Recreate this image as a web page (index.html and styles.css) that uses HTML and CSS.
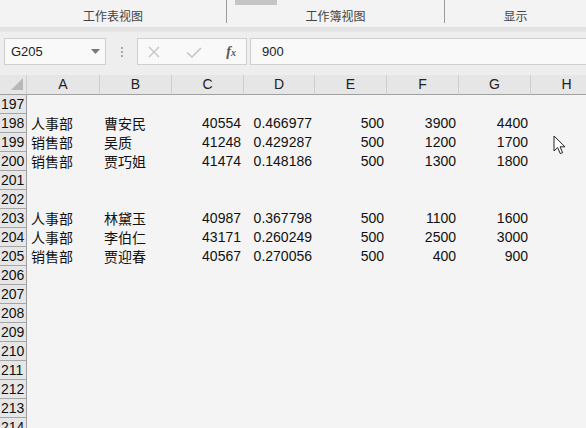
FILE: index.html
```html
<!DOCTYPE html>
<html lang="zh">
<head>
<meta charset="utf-8">
<link rel="stylesheet" href="styles.css">
</head>
<body>
<div class="app">
  <div class="ribbon">
    <div class="group g1"><span>工作表视图</span></div>
    <div class="group g2"><span>工作簿视图</span><div class="chip"></div></div>
    <div class="group g3"><span>显示</span></div>
  </div>
  <div class="band"></div>
  <div class="fbar">
    <div class="namebox"><span>G205</span><svg class="dd" width="9" height="5" viewBox="0 0 9 5"><path d="M0 0H9L4.5 5Z" fill="#777"/></svg></div>
    <div class="dots"><i></i><i></i><i></i></div>
    <div class="btns">
      <svg width="14" height="14" viewBox="0 0 14 14"><path d="M2 2L12 12M12 2L2 12" stroke="#c4c4c4" stroke-width="1.3"/></svg>
      <svg width="16" height="14" viewBox="0 0 16 14"><path d="M1 7.5L6 12L15 3" stroke="#c4c4c4" stroke-width="1.5" fill="none"/></svg>
      <span class="fx"><i>f</i><small>x</small></span>
    </div>
    <div class="input">900</div>
  </div>
  <div class="sheet">
    <div class="corner"><svg width="12" height="12" viewBox="0 0 12 12"><path d="M12 0V12H0Z" fill="#b8b8b8"/></svg></div>
    <div class="ch">A</div><div class="ch">B</div><div class="ch">C</div><div class="ch">D</div><div class="ch">E</div><div class="ch">F</div><div class="ch">G</div><div class="ch">H</div>

    <div class="rh">197</div><div class="c"></div><div class="c"></div><div class="c"></div><div class="c"></div><div class="c"></div><div class="c"></div><div class="c"></div><div class="c"></div>
    <div class="rh">198</div><div class="c">人事部</div><div class="c">曹安民</div><div class="c n">40554</div><div class="c n">0.466977</div><div class="c n">500</div><div class="c n">3900</div><div class="c n">4400</div><div class="c"></div>
    <div class="rh">199</div><div class="c">销售部</div><div class="c">吴质</div><div class="c n">41248</div><div class="c n">0.429287</div><div class="c n">500</div><div class="c n">1200</div><div class="c n">1700</div><div class="c"></div>
    <div class="rh">200</div><div class="c">销售部</div><div class="c">贾巧姐</div><div class="c n">41474</div><div class="c n">0.148186</div><div class="c n">500</div><div class="c n">1300</div><div class="c n">1800</div><div class="c"></div>
    <div class="rh">201</div><div class="c"></div><div class="c"></div><div class="c"></div><div class="c"></div><div class="c"></div><div class="c"></div><div class="c"></div><div class="c"></div>
    <div class="rh">202</div><div class="c"></div><div class="c"></div><div class="c"></div><div class="c"></div><div class="c"></div><div class="c"></div><div class="c"></div><div class="c"></div>
    <div class="rh">203</div><div class="c">人事部</div><div class="c">林黛玉</div><div class="c n">40987</div><div class="c n">0.367798</div><div class="c n">500</div><div class="c n">1100</div><div class="c n">1600</div><div class="c"></div>
    <div class="rh">204</div><div class="c">人事部</div><div class="c">李伯仁</div><div class="c n">43171</div><div class="c n">0.260249</div><div class="c n">500</div><div class="c n">2500</div><div class="c n">3000</div><div class="c"></div>
    <div class="rh">205</div><div class="c">销售部</div><div class="c">贾迎春</div><div class="c n">40567</div><div class="c n">0.270056</div><div class="c n">500</div><div class="c n">400</div><div class="c n">900</div><div class="c"></div>
    <div class="rh">206</div><div class="c"></div><div class="c"></div><div class="c"></div><div class="c"></div><div class="c"></div><div class="c"></div><div class="c"></div><div class="c"></div>
    <div class="rh">207</div><div class="c"></div><div class="c"></div><div class="c"></div><div class="c"></div><div class="c"></div><div class="c"></div><div class="c"></div><div class="c"></div>
    <div class="rh">208</div><div class="c"></div><div class="c"></div><div class="c"></div><div class="c"></div><div class="c"></div><div class="c"></div><div class="c"></div><div class="c"></div>
    <div class="rh">209</div><div class="c"></div><div class="c"></div><div class="c"></div><div class="c"></div><div class="c"></div><div class="c"></div><div class="c"></div><div class="c"></div>
    <div class="rh">210</div><div class="c"></div><div class="c"></div><div class="c"></div><div class="c"></div><div class="c"></div><div class="c"></div><div class="c"></div><div class="c"></div>
    <div class="rh">211</div><div class="c"></div><div class="c"></div><div class="c"></div><div class="c"></div><div class="c"></div><div class="c"></div><div class="c"></div><div class="c"></div>
    <div class="rh">212</div><div class="c"></div><div class="c"></div><div class="c"></div><div class="c"></div><div class="c"></div><div class="c"></div><div class="c"></div><div class="c"></div>
    <div class="rh">213</div><div class="c"></div><div class="c"></div><div class="c"></div><div class="c"></div><div class="c"></div><div class="c"></div><div class="c"></div><div class="c"></div>
    <div class="rh">214</div><div class="c"></div><div class="c"></div><div class="c"></div><div class="c"></div><div class="c"></div><div class="c"></div><div class="c"></div><div class="c"></div>
  </div>
  <svg class="cursor" width="14" height="20" viewBox="0 0 14 20"><path d="M1 1V16L4.6 12.6L7.3 18.6L9.6 17.6L7 11.8H12Z" fill="#fff" stroke="#222" stroke-width="1" stroke-linejoin="round"/></svg>
</div>
</body>
</html>
```
FILE: styles.css
```css
* { box-sizing: border-box; }
html, body { margin: 0; padding: 0; }
body {
  width: 586px; height: 428px; overflow: hidden;
  font-family: "Liberation Sans", "Noto Sans CJK SC", sans-serif;
  background: #f3f3f3; color: #111;
}
.app { position: relative; width: 586px; height: 428px; overflow: hidden; }
.ribbon {
  height: 27px; background: #f3f3f3; display: flex;
}
.group {
  position: relative; display: flex; justify-content: center; align-items: flex-start;
  padding-top: 8px; font-size: 12px; color: #444;
  font-family: "Noto Sans CJK SC", sans-serif; line-height: 16px;
}
.g1 { width: 227px; border-right: 1px solid #9a9a9a; height: 23px; }
.g2 { width: 218px; border-right: 1px solid #9a9a9a; height: 23px; }
.g3 { flex: 1; }
.chip { position: absolute; left: 8px; top: 0; width: 42px; height: 5px; background: #c6c6c6; }
.band { height: 5px; background: linear-gradient(#e0e0e0, #e6e6e6); }
.fbar {
  height: 43px; background: #eeeeee; display: flex; align-items: flex-start;
  padding: 6px 0 0 4px;
}
.namebox {
  width: 102px; height: 27px; background: #f9f9f9; border: 1px solid #cfcfcf;
  display: flex; align-items: center; justify-content: space-between;
  padding: 0 5px 0 6px; font-size: 13px; color: #222;
}
.dots { width: 31px; height: 27px; display: flex; flex-direction: column; align-items: center; justify-content: center; gap: 2px; }
.dots i { display: block; width: 2px; height: 2px; background: #a8a8a8; }
.btns {
  width: 110px; height: 27px; background: #f9f9f9; border: 1px solid #cfcfcf;
  display: flex; align-items: center; justify-content: space-between; padding: 0 10px 0 9px;
}
.fx { font-family: "Liberation Serif", serif; font-style: italic; font-size: 14px; color: #555; font-weight: bold; }
.fx i { font-style: italic; }
.fx small { font-size: 10px; }
.input {
  margin-left: 3px; flex: 1; height: 27px; background: #f9f9f9; border: 1px solid #cfcfcf; border-right: none;
  font-size: 13px; display: flex; align-items: center; padding-left: 11px; color: #222;
}
.sheet {
  display: grid;
  grid-template-columns: 27px 73px 72px 72px 71px 72px 72px 72px 72px;
  grid-template-rows: 20px repeat(18, 19px);
  font-size: 14px;
}
.corner {
  background: #e6e6e6; border-bottom: 1px solid #a0a0a0; border-right: 1px solid #cfcfcf;
  display: flex; align-items: flex-end; justify-content: flex-end; padding: 0 3px 4px 0;
}
.ch {
  background: #e6e6e6; border-bottom: 1px solid #a0a0a0; border-right: 1px solid #cfcfcf;
  text-align: center; line-height: 19px; font-size: 14px; color: #222;
}
.rh {
  background: #e6e6e6; border-bottom: 1px solid #a6a6a6; border-right: 1px solid #a0a0a0;
  font-size: 14px; line-height: 18px; text-align: left; padding-left: 1px; color: #111;
}
.c {
  background: #f4f4f4; line-height: 18px; padding: 0 3px 0 4px; white-space: nowrap; overflow: hidden;
  font-family: "Noto Sans CJK SC", sans-serif; font-size: 14px;
}
.c.n { text-align: right; font-family: "Liberation Sans", sans-serif; padding-right: 3px; }
.cursor { position: absolute; left: 553px; top: 135px; }
```
